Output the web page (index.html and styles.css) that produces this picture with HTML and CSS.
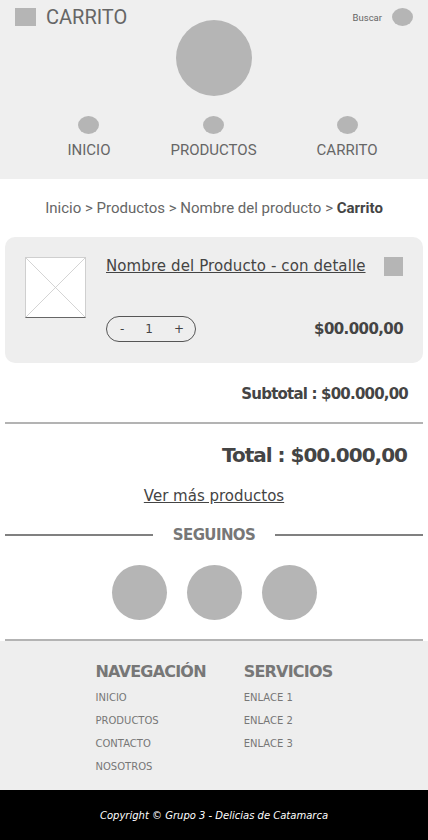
FILE: index.html
```html
<!DOCTYPE html>
<html lang="es">
<head>
<meta charset="utf-8">
<title>Carrito</title>
<link rel="stylesheet" href="styles.css">
</head>
<body>
<header class="header">
  <div class="topbar">
    <div class="brand"><span class="brand-icon"></span><span class="brand-title">CARRITO</span></div>
    <div class="logo"></div>
    <div class="search"><span class="search-label">Buscar</span><span class="search-icon"></span></div>
  </div>
  <nav class="nav">
    <a class="nav-item" href="#"><span class="nav-dot"></span><span>INICIO</span></a>
    <a class="nav-item" href="#"><span class="nav-dot"></span><span>PRODUCTOS</span></a>
    <a class="nav-item" href="#"><span class="nav-dot"></span><span>CARRITO</span></a>
  </nav>
</header>

<main class="main">
  <p class="breadcrumb">Inicio &gt; Productos &gt; Nombre del producto &gt; <b>Carrito</b></p>

  <section class="card">
    <div class="thumb">
      <svg viewBox="0 0 60 60" preserveAspectRatio="none" width="100%" height="100%">
        <line x1="0" y1="0" x2="60" y2="60" stroke="#c8c8c8" stroke-width="0.8"/>
        <line x1="60" y1="0" x2="0" y2="60" stroke="#c8c8c8" stroke-width="0.8"/>
      </svg>
    </div>
    <div class="card-body">
      <div class="card-row">
        <a class="product-name" href="#">Nombre del Producto - con detalle</a>
        <span class="remove"></span>
      </div>
      <div class="card-row">
        <div class="qty"><span>-</span><span>1</span><span>+</span></div>
        <span class="price">$00.000,00</span>
      </div>
    </div>
  </section>

  <p class="subtotal">Subtotal : $00.000,00</p>
  <hr class="rule">
  <p class="total">Total : $00.000,00</p>
  <p class="more"><a href="#">Ver más productos</a></p>

  <div class="follow">
    <span class="follow-line"></span>
    <span class="follow-title">SEGUINOS</span>
    <span class="follow-line"></span>
  </div>
  <div class="socials">
    <span class="social"></span>
    <span class="social"></span>
    <span class="social"></span>
  </div>
  <hr class="rule rule-footer">
</main>

<footer class="footer">
  <div class="footer-cols">
    <div class="footer-col">
      <h3 class="footer-title">NAVEGACIÓN</h3>
      <a href="#">INICIO</a>
      <a href="#">PRODUCTOS</a>
      <a href="#">CONTACTO</a>
      <a href="#">NOSOTROS</a>
    </div>
    <div class="footer-col">
      <h3 class="footer-title">SERVICIOS</h3>
      <a href="#">ENLACE 1</a>
      <a href="#">ENLACE 2</a>
      <a href="#">ENLACE 3</a>
    </div>
  </div>
  <div class="copyright">Copyright © Grupo 3 - Delicias de Catamarca</div>
</footer>
</body>
</html>
```

FILE: styles.css
```css
* { box-sizing: border-box; }

body {
  margin: 0;
  background: #fff;
  font-family: "DejaVu Sans", "Open Sans", sans-serif;
  color: #444;
}

a { color: inherit; }

/* Header */
.header {
  background: #efefef;
  padding: 8px 0 20px;
  font-family: Roboto, "Liberation Sans", sans-serif;
}

.topbar {
  display: grid;
  grid-template-columns: 1fr auto 1fr;
  align-items: start;
  padding: 0 15px;
}

.brand {
  display: flex;
  align-items: center;
  gap: 10px;
  height: 18px;
}

.brand-icon {
  width: 21px;
  height: 18px;
  background: #b5b5b5;
}

.brand-title {
  font-size: 20px;
  color: #666;
  line-height: 18px;
}

.logo {
  width: 76px;
  height: 76px;
  border-radius: 50%;
  background: #b5b5b5;
  margin-top: 12px;
}

.search {
  justify-self: end;
  display: flex;
  align-items: center;
  gap: 10px;
  height: 18px;
}

.search-label {
  font-size: 9.5px;
  color: #666;
}

.search-icon {
  width: 21px;
  height: 18px;
  border-radius: 50%;
  background: #b5b5b5;
}

.nav {
  display: flex;
  justify-content: center;
  gap: 60px;
  margin-top: 20px;
  padding-left: 17px;
}

.nav-item {
  display: flex;
  flex-direction: column;
  align-items: center;
  gap: 7px;
  text-decoration: none;
  color: #666;
  font-size: 15px;
  line-height: 18px;
}

.nav-dot {
  width: 21px;
  height: 18px;
  border-radius: 50%;
  background: #b5b5b5;
}

/* Main */
.main {
  padding: 0 5px;
}

.breadcrumb {
  margin: 20px 0;
  text-align: center;
  font-family: Roboto, "Liberation Sans", sans-serif;
  font-size: 15px;
  line-height: 18px;
  color: #666;
}

.breadcrumb b {
  color: #444;
  font-weight: 700;
}

.card {
  display: flex;
  gap: 20px;
  background: #eee;
  border-radius: 10px;
  padding: 20px 20px 21px;
}

.thumb {
  width: 61px;
  height: 61px;
  flex: none;
  background: #fff;
  border: 1px solid #cfcfcf;
  border-bottom-color: #666;
}

.thumb svg { display: block; }

.card-body {
  flex: 1;
  height: 85px;
  display: flex;
  flex-direction: column;
  justify-content: space-between;
}

.card-row {
  display: flex;
  justify-content: space-between;
  align-items: center;
}

.product-name {
  font-size: 15px;
  color: #444;
  line-height: 19px;
  letter-spacing: 0.1px;
}

.remove {
  width: 19px;
  height: 19px;
  background: #b5b5b5;
  margin-top: -1px;
}

.qty {
  width: 90px;
  height: 26px;
  border: 1px solid #555;
  border-radius: 13px;
  display: flex;
  justify-content: space-between;
  align-items: center;
  padding: 0 11px 0 13px;
  font-size: 12px;
  color: #444;
}

.price {
  font-size: 15px;
  font-weight: 700;
  color: #444;
  letter-spacing: -0.6px;
}

.subtotal {
  margin: 22px 15px 0 0;
  text-align: right;
  font-size: 15px;
  font-weight: 700;
  line-height: 18px;
  color: #444;
  letter-spacing: -0.8px;
}

.rule {
  border: 0;
  height: 2px;
  background: #b3b3b3;
  margin: 19px 0 0;
}

.total {
  margin: 19px 16px 0 0;
  text-align: right;
  font-size: 20px;
  font-weight: 700;
  line-height: 24px;
  color: #444;
  letter-spacing: -1px;
}

.more {
  margin: 20px 0 0;
  text-align: center;
  font-size: 15px;
  line-height: 18px;
  color: #444;
}

.follow {
  display: flex;
  align-items: center;
  gap: 20px;
  margin-top: 21px;
}

.follow-line {
  flex: 1;
  height: 2px;
  background: #808080;
}

.follow-title {
  font-size: 15px;
  font-weight: 700;
  color: #777;
  line-height: 18px;
  letter-spacing: -0.6px;
}

.socials {
  display: flex;
  justify-content: center;
  gap: 20px;
  margin-top: 21px;
}

.social {
  width: 55px;
  height: 55px;
  border-radius: 50%;
  background: #b5b5b5;
}

.rule-footer {
  margin-top: 19px;
}

/* Footer */
.footer {
  background: #eee;
}

.footer-cols {
  display: flex;
  justify-content: center;
  gap: 38px;
  padding: 21px 0 16px;
}

.footer-col {
  display: flex;
  flex-direction: column;
  gap: 9px;
  color: #777;
  font-size: 10px;
  line-height: 14px;
}

.footer-col a {
  text-decoration: none;
}

.footer-title {
  margin: 0;
  font-size: 16px;
  font-weight: 700;
  line-height: 20px;
  color: #777;
  letter-spacing: -0.8px;
}

.copyright {
  background: #000;
  color: #fff;
  height: 50px;
  display: flex;
  align-items: center;
  justify-content: center;
  font-size: 10px;
  font-style: italic;
}
```
